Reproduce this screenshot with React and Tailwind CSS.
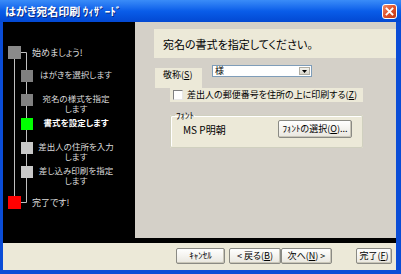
export default function App() {
  const steps = [
    { text: "はがきを選択します", color: "bg-[#808080]" },
    { text: "宛名の様式を指定\nします", color: "bg-[#808080]" },
    { text: "書式を設定します", color: "bg-[#00FF00]", current: true },
    { text: "差出人の住所を入力\nします", color: "bg-[#C8C8C8]" },
    { text: "差し込み印刷を指定\nします", color: "bg-[#C8C8C8]" },
  ];
  const btn =
    "h-[16px] flex items-center justify-center text-[9px] leading-[10px] text-black rounded-[2px] border border-[#8A8A84] bg-gradient-to-b from-[#FFFFFF] to-[#E9E7DF] shadow-[inset_-1px_-1px_0_#C9C6B8]";
  return (
    <div className="w-[401px] h-[274px] flex flex-col overflow-hidden bg-[#0A4CD6] font-['Noto_Sans_CJK_JP',sans-serif] [font-feature-settings:'palt']">
      {/* title bar */}
      <div className="h-[22px] shrink-0 flex items-center pl-[5px] pr-[4px] bg-gradient-to-b from-[#3A8CF8] via-[#0A5DE9] to-[#0348D2]">
        <span className="text-[11px] leading-[12px] font-bold text-white [text-shadow:1px_1px_0_#0A2A80]">
          はがき宛名印刷 ｳｨｻﾞｰﾄﾞ
        </span>
        <div className="ml-auto w-[15px] h-[15px] rounded-[3px] border border-white bg-gradient-to-br from-[#F08A66] via-[#E0512A] to-[#C23A14] flex items-center justify-center">
          <svg width="9" height="9" viewBox="0 0 9 9">
            <path d="M1.5 1.5 L7.5 7.5 M7.5 1.5 L1.5 7.5" stroke="white" strokeWidth="1.8" strokeLinecap="square" />
          </svg>
        </div>
      </div>

      {/* body */}
      <div className="flex-1 flex flex-col ml-[3px] mr-[5px] mb-[4px]">
        <div className="h-[221px] shrink-0 bg-black flex pb-[5px]">
          {/* left step panel */}
          <div className="w-[132px] relative pt-[24px] text-[#DADADA]">
            <svg className="absolute left-0 top-0 pointer-events-none" width="132" height="216">
              <path d="M11.5 36 V174 M18 30.5 H23.5 V180.5 H18" stroke="#C0C0C0" strokeWidth="1" fill="none" />
            </svg>
            <div className="h-[24px] flex items-start">
              <div className="relative ml-[5px] w-[13px] h-[13px] bg-[#8A8A8A]" />
              <span className="ml-[11px] text-[9px] leading-[13px]">始めましょう!</span>
            </div>
            {steps.map((s, i) => (
              <div key={i} className="h-[24px] flex items-start">
                <div className={`relative ml-[18px] w-[12px] h-[12px] shrink-0 ${s.color}`} />
                <div
                  className={`ml-[3px] -mt-[1px] w-[80px] text-center text-[8.5px] leading-[10px] whitespace-pre-line ${
                    s.current ? "font-bold text-white" : ""
                  }`}
                >
                  {s.text}
                </div>
              </div>
            ))}
            <div className="mt-[6px] h-[13px] flex items-start">
              <div className="relative ml-[5px] w-[13px] h-[13px] bg-[#FF0000]" />
              <span className="ml-[11px] text-[9px] leading-[13px]">完了です!</span>
            </div>
          </div>

          {/* right panel */}
          <div className="flex-1 bg-[#D4D0C8] flex flex-col text-black">
            <div className="mt-[7px] ml-[19px] h-[29px] bg-[#ECE9D8] pl-[9px] flex items-center text-[11px] leading-[12px]">
              宛名の書式を指定してください。
            </div>
            <div className="mt-[7px] ml-[20px] flex items-start">
              <div className="mt-[3px] w-[47px] h-[20px] bg-[#ECE9D8] pl-[8px] pt-[2px] text-[9px] leading-[10px]">
                敬称(<span className="underline">S</span>)
              </div>
              <div className="ml-[10px] w-[100px] h-[12px] bg-white border border-[#7F9DB9] flex items-center">
                <span className="ml-[2px] text-[9px] leading-[10px]">様</span>
                <div className="ml-auto mr-[1px] w-[11px] h-[8px] bg-gradient-to-b from-[#F4F3EE] to-[#D8D5CB] border border-[#B0ADA2] flex items-center justify-center">
                  <svg width="5" height="3" viewBox="0 0 5 3">
                    <path d="M0 0 H5 L2.5 3 Z" fill="black" />
                  </svg>
                </div>
              </div>
            </div>
            <div className="ml-[35px] w-[193px] h-[14px] bg-[#ECE9D8] flex items-center pl-[3px]">
              <div className="w-[10px] h-[10px] bg-white border-t border-l border-[#808080] border-r border-b border-r-[#E8E8E8] border-b-[#E8E8E8]" />
              <span className="ml-[4px] text-[9px] leading-[10px]">
                差出人の郵便番号を住所の上に印刷する(<span className="underline">Z</span>)
              </span>
            </div>
            <fieldset className="mt-[9px] ml-[35px] w-[193px] h-[37px] border border-[#D0D0BF] bg-[#ECE9D8] rounded-[2px] shadow-[inset_1px_1px_0_#FFFFFF] flex">
              <legend className="ml-[4px] px-[1px] text-[9px] leading-[9px]">ﾌｫﾝﾄ</legend>
              <div className="flex-1 flex items-center">
                <span className="ml-[12px] text-[10px] leading-[11px]">MS P明朝</span>
                <div className={`ml-auto mr-[10px] w-[74px] !h-[18px] ${btn}`}>
                  ﾌｫﾝﾄの選択(<span className="underline">O</span>)...
                </div>
              </div>
            </fieldset>
          </div>
        </div>

        {/* bottom bar */}
        <div className="flex-1 bg-[#ECE9D8] flex items-start pt-[5px]">
          <div className={`ml-[173px] w-[49px] ${btn}`}>ｷｬﾝｾﾙ</div>
          <div className={`ml-[4px] w-[52px] ${btn}`}>
            &lt; 戻る(<span className="underline">B</span>)
          </div>
          <div className={`w-[51px] ${btn}`}>
            次へ(<span className="underline">N</span>) &gt;
          </div>
          <div className={`ml-[24px] w-[36px] ${btn}`}>
            完了(<span className="underline">F</span>)
          </div>
        </div>
      </div>
    </div>
  );
}
